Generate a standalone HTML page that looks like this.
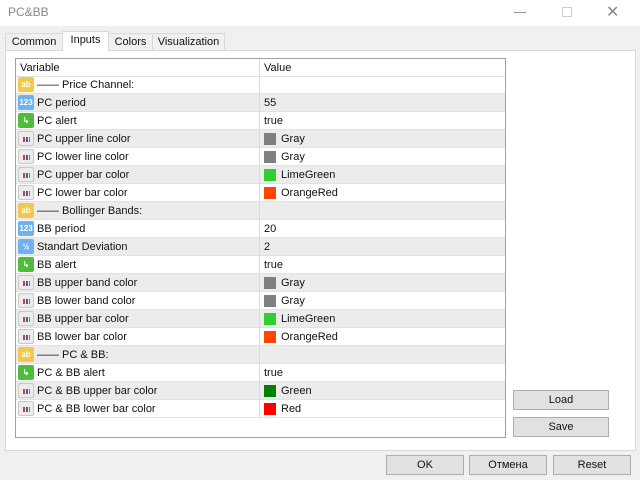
<!DOCTYPE html>
<html><head><meta charset="utf-8"><style>
*{margin:0;padding:0;box-sizing:border-box}
body{width:640px;height:480px;background:#f0f0f0;font-family:"Liberation Sans",sans-serif;font-size:11px;color:#111;position:relative;overflow:hidden}
.a{position:absolute}
.title{left:0;top:0;width:640px;height:26px;background:#fff}
.tab{top:33px;height:17px;background:#f0f0f0;border:1px solid #d9d9d9;border-bottom:none;text-align:center;line-height:16px;font-size:11px}
.panel{left:5px;top:50px;width:631px;height:401px;background:#fff;border:1px solid #d9d9d9}
.tbl{left:15px;top:58px;width:491px;height:380px;border:1px solid #a0a0a0;background:#fff}
.row{position:absolute;left:0;width:489px;height:18px;border-bottom:1px solid #e3e3e3}
.row.g{background:#ececec}
.row .n{position:absolute;left:21px;top:3px;white-space:nowrap}
.row .v{position:absolute;left:248px;top:3px;white-space:nowrap}
.row .d{position:absolute;left:243px;top:0;width:1px;height:18px;background:#dcdcdc}
.ic{position:absolute;left:2px;top:1px;width:16px;height:15px;border-radius:2px;font-size:8px;line-height:15px;text-align:center;font-weight:bold}
.sw{position:absolute;left:248px;top:3px;width:12px;height:12px}
.row .v2{position:absolute;left:265px;top:3px}
.btn{background:#e1e1e1;border:1px solid #adadad;text-align:center;line-height:18px;font-size:11px;height:20px}
.dots{position:absolute;left:4px;top:5px;width:7px;height:5px;background:linear-gradient(90deg,#e33 0 2px,transparent 2px 3px,#36c 3px 5px,transparent 5px 6px,#3a3 6px 7px)}
</style></head><body>
<div class="a title"></div>
<div class="a" style="left:8px;top:5px;font-size:12px;color:#888">PC&amp;BB</div>
<div class="a" style="left:514px;top:12px;width:12px;height:1px;background:#999"></div>
<div class="a" style="left:562px;top:7px;width:10px;height:10px;border:1px solid #ccc"></div>
<div class="a" style="left:606px;top:2px;font-size:16px;color:#888">✕</div>
<div class="a panel"></div>
<div class="a tab" style="left:5px;width:58px">Common</div>
<div class="a tab" style="left:62px;width:47px;top:31px;height:20px;background:#fff">Inputs</div>
<div class="a tab" style="left:108px;width:45px">Colors</div>
<div class="a tab" style="left:152px;width:73px">Visualization</div>
<div class="a tbl">
<div class="row" style="top:0"><span class="n" style="left:4px">Variable</span><span class="v">Value</span><span class="d"></span></div>
<div id="rows"></div>
</div>
<div class="a btn" style="left:513px;top:390px;width:96px">Load</div>
<div class="a btn" style="left:513px;top:417px;width:96px">Save</div>
<div class="a btn" style="left:386px;top:455px;width:78px">OK</div>
<div class="a btn" style="left:469px;top:455px;width:78px">Отмена</div>
<div class="a btn" style="left:553px;top:455px;width:78px">Reset</div>
<script>
var R=[["s","—— Price Channel:",""],["i","PC period","55"],["b","PC alert","true"],["c","PC upper line color","Gray","#808080"],["c","PC lower line color","Gray","#808080"],["c","PC upper bar color","LimeGreen","#32cd32"],["c","PC lower bar color","OrangeRed","#ff4500"],
["s","—— Bollinger Bands:",""],["i","BB period","20"],["f","Standart Deviation","2"],["b","BB alert","true"],["c","BB upper band color","Gray","#808080"],["c","BB lower band color","Gray","#808080"],["c","BB upper bar color","LimeGreen","#32cd32"],["c","BB lower bar color","OrangeRed","#ff4500"],
["s","—— PC &amp; BB:",""],["b","PC &amp; BB alert","true"],["c","PC &amp; BB upper bar color","Green","#008000"],["c","PC &amp; BB lower bar color","Red","#ff0000"]];
var h="";
R.forEach(function(r,i){
var ic;
if(r[0]=="s")ic='<span class="ic" style="background:#f2c94c;color:#fff">ab</span>';
else if(r[0]=="i")ic='<span class="ic" style="background:#6fb2ef;color:#fff">123</span>';
else if(r[0]=="f")ic='<span class="ic" style="background:#6fb2ef;color:#fff">½</span>';
else if(r[0]=="b")ic='<span class="ic" style="background:#4cbf3a;color:#fff">↳</span>';
else ic='<span class="ic" style="background:#ececec;border:1px solid #c8c8c8"><span class="dots"></span></span>';
var v=r[0]=="c"?'<span class="sw" style="background:'+r[3]+'"></span><span class="v2">'+r[2]+'</span>':'<span class="v">'+r[2]+'</span>';
h+='<div class="row'+(i%2?' g':'')+'" style="top:'+(17+i*18)+'px">'+ic+'<span class="n">'+r[1]+'</span><span class="d"></span>'+v+'</div>';
});
document.getElementById("rows").innerHTML=h;
</script>
</body></html>
